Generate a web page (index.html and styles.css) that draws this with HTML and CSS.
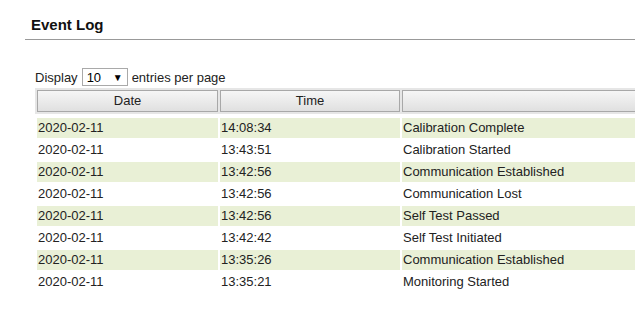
FILE: index.html
```html
<!DOCTYPE html>
<html>
<head>
<meta charset="utf-8">
<link rel="stylesheet" href="styles.css">
</head>
<body>
<div class="page">
  <h1 class="title">Event Log</h1>
  <div class="rule"></div>
  <div class="controls">
    <span>Display</span>
    <span class="select"><span class="sel-val">10</span><span class="sel-arrow">▼</span></span>
    <span>entries per page</span>
  </div>
  <div class="log">
    <div class="head">
      <div class="th">Date</div>
      <div class="th">Time</div>
      <div class="th"></div>
    </div>
    <div class="body">
      <div class="row odd"><div class="td">2020-02-11</div><div class="td">14:08:34</div><div class="td">Calibration Complete</div></div>
      <div class="row"><div class="td">2020-02-11</div><div class="td">13:43:51</div><div class="td">Calibration Started</div></div>
      <div class="row odd"><div class="td">2020-02-11</div><div class="td">13:42:56</div><div class="td">Communication Established</div></div>
      <div class="row"><div class="td">2020-02-11</div><div class="td">13:42:56</div><div class="td">Communication Lost</div></div>
      <div class="row odd"><div class="td">2020-02-11</div><div class="td">13:42:56</div><div class="td">Self Test Passed</div></div>
      <div class="row"><div class="td">2020-02-11</div><div class="td">13:42:42</div><div class="td">Self Test Initiated</div></div>
      <div class="row odd"><div class="td">2020-02-11</div><div class="td">13:35:26</div><div class="td">Communication Established</div></div>
      <div class="row"><div class="td">2020-02-11</div><div class="td">13:35:21</div><div class="td">Monitoring Started</div></div>
    </div>
  </div>
</div>
</body>
</html>
```
FILE: styles.css
```css
html, body {
  margin: 0;
  padding: 0;
  background: #fff;
  overflow: hidden;
}
body {
  font-family: "Liberation Sans", Arial, sans-serif;
  font-size: 13px;
  color: #222;
}
.page {
  width: 635px;
  height: 331px;
  overflow: hidden;
}
.title {
  margin: 0;
  padding: 15px 0 0 31px;
  font-size: 15px;
  font-weight: bold;
  line-height: 20px;
  color: #111;
}
.rule {
  margin: 4px 0 0 25px;
  height: 1px;
  background: #999;
}
.controls {
  margin: 28px 0 0 35px;
  display: flex;
  align-items: center;
  gap: 4px;
  height: 18px;
  color: #222;
}
.select {
  display: flex;
  align-items: center;
  justify-content: space-between;
  box-sizing: border-box;
  width: 46px;
  height: 18px;
  border: 1px solid #a9a9a9;
  padding: 0 4px 0 4px;
  background: #fff;
  color: #000;
}
.sel-val {
  font-size: 13px;
}
.sel-arrow {
  font-size: 10px;
}
.log {
  margin: 2px 0 0 35px;
  width: 800px;
}
.head {
  display: grid;
  grid-template-columns: 181px 180px 1fr;
  gap: 2px;
  padding: 2px;
  background: #e6e6e6;
}
.th {
  height: 20px;
  line-height: 20px;
  border: 1px solid #a8a8a8;
  background: linear-gradient(#f6f6f6, #e0e0e0);
  text-align: center;
  color: #222;
}
.body {
  display: flex;
  flex-direction: column;
  gap: 2px;
  padding: 4px 2px 0 2px;
}
.row {
  display: grid;
  grid-template-columns: 181px 180px 1fr;
  column-gap: 2px;
}
.td {
  height: 20px;
  line-height: 20px;
  padding-left: 1px;
  white-space: nowrap;
}
.row.odd .td {
  background: #e9f0d6;
}
```
